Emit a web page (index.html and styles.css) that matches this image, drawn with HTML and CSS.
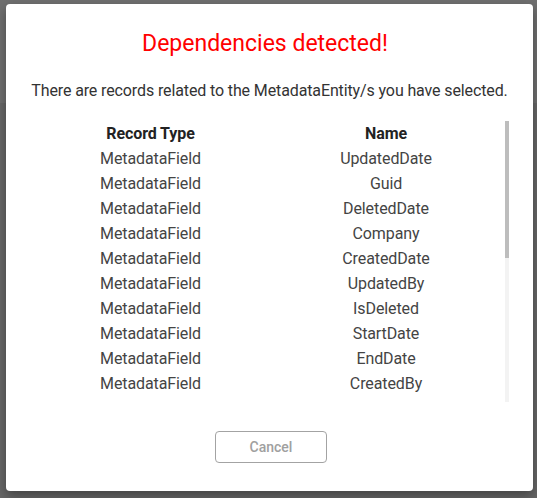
FILE: index.html
```html
<!DOCTYPE html>
<html>
<head>
<meta charset="utf-8">
<link rel="stylesheet" href="styles.css">
</head>
<body>
<div class="backdrop">
  <div class="modal">
    <h1 class="title">Dependencies detected!</h1>
    <p class="subtitle">There are records related to the MetadataEntity/s you have selected.</p>
    <div class="scroll-wrap">
      <div class="scroller">
        <div class="grid">
          <div class="th">Record Type</div><div class="th">Name</div>
          <div class="td">MetadataField</div><div class="td">UpdatedDate</div>
          <div class="td">MetadataField</div><div class="td">Guid</div>
          <div class="td">MetadataField</div><div class="td">DeletedDate</div>
          <div class="td">MetadataField</div><div class="td">Company</div>
          <div class="td">MetadataField</div><div class="td">CreatedDate</div>
          <div class="td">MetadataField</div><div class="td">UpdatedBy</div>
          <div class="td">MetadataField</div><div class="td">IsDeleted</div>
          <div class="td">MetadataField</div><div class="td">StartDate</div>
          <div class="td">MetadataField</div><div class="td">EndDate</div>
          <div class="td">MetadataField</div><div class="td">CreatedBy</div>
        </div>
      </div>
      <div class="track"><div class="thumb"></div></div>
    </div>
    <div class="actions">
      <button class="btn">Cancel</button>
    </div>
  </div>
</div>
</body>
</html>
```

FILE: styles.css
```css
html, body {
  margin: 0;
  padding: 0;
}
body {
  width: 537px;
  height: 498px;
  overflow: hidden;
  background: linear-gradient(#6f6f6f 0, #6f6f6f 103px, #676767 103px, #676767 100%);
  font-family: Roboto, "Liberation Sans", sans-serif;
}
.backdrop {
  padding: 4px 4px 0 6px;
}
.modal {
  box-sizing: border-box;
  width: 527px;
  height: 487px;
  background: #fff;
  border-radius: 4px;
  box-shadow: 0 5px 12px rgba(0, 0, 0, 0.35);
  padding: 26px 0 28px 0;
  display: flex;
  flex-direction: column;
}
.title {
  margin: 0;
  padding-right: 9px;
  font-size: 23px;
  line-height: 28px;
  font-weight: 400;
  color: #ff0000;
  text-align: center;
}
.subtitle {
  margin: 23px 0 20px 0;
  font-size: 16px;
  line-height: 20px;
  letter-spacing: -0.12px;
  color: #333;
  text-align: center;
}
.scroll-wrap {
  height: 281px;
  margin: 0 24px;
  display: flex;
}
.scroller {
  flex: 1;
  overflow: hidden;
}
.track {
  width: 4px;
  background: #f3f3f3;
}
.thumb {
  height: 137px;
  background: #bdbdbd;
}
.grid {
  display: grid;
  grid-template-columns: 241px 230px;
}
.th, .td {
  font-size: 16px;
  line-height: 25px;
  text-align: center;
  white-space: nowrap;
  letter-spacing: -0.1px;
}
.th {
  font-weight: 700;
  color: #222;
}
.td {
  color: #444;
}
.actions {
  margin-top: 29px;
  display: flex;
  justify-content: center;
  padding-left: 3px;
}
.btn {
  width: 112px;
  height: 32px;
  background: #fff;
  border: 1px solid #a3a3a3;
  border-radius: 4px;
  color: #a0a0a0;
  font-family: Roboto, "Liberation Sans", sans-serif;
  font-size: 14px;
  font-weight: 500;
  padding: 0;
}
```
